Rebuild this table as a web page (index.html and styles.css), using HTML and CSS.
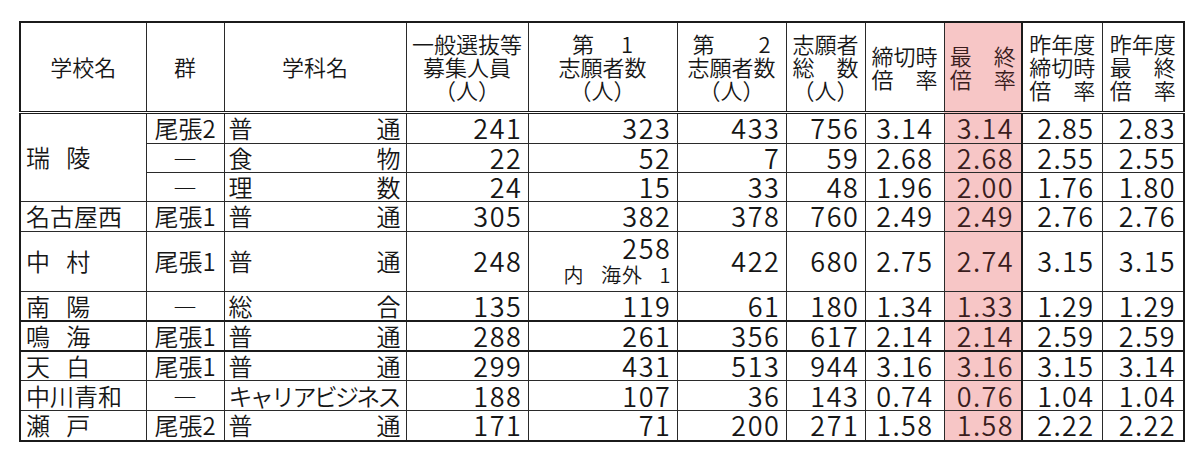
FILE: index.html
```html
<!DOCTYPE html>
<html lang="ja">
<head>
<meta charset="utf-8">
<link rel="stylesheet" href="styles.css">
</head>
<body>
<div class="page">
<table class="t">
<colgroup>
<col class="w-sch"><col class="w-grp"><col class="w-dep"><col class="w-cap"><col class="w-a1"><col class="w-a2"><col class="w-tot"><col class="w-r1"><col class="w-r2"><col class="w-r3"><col class="w-r4">
</colgroup>
<thead>
<tr class="hd">
<th>学校名</th>
<th>群</th>
<th>学科名</th>
<th>一般選抜等<br>募集人員<br>（人）</th>
<th>第　 1<br>志願者数<br>（人）</th>
<th>第　　2<br>志願者数<br>（人）</th>
<th>志願者<br>総　数<br>（人）</th>
<th>締切時<br>倍　率</th>
<th class="pk">最　終<br>倍　率</th>
<th class="sep">昨年度<br>締切時<br>倍　率</th>
<th>昨年度<br>最　終<br>倍　率</th>
</tr>
</thead>
<tbody>
<tr class="h31">
<td class="sch" rowspan="3">瑞 陵</td><td class="grp">尾張2</td><td class="dep"><div class="jst"><span>普</span><span>通</span></div></td>
<td class="num">241</td><td class="num">323</td><td class="num">433</td><td class="num">756</td><td class="dec d1">3.14</td><td class="dec pk">3.14</td><td class="dec sep">2.85</td><td class="dec">2.83</td>
</tr>
<tr class="h29">
<td class="grp">―</td><td class="dep"><div class="jst"><span>食</span><span>物</span></div></td>
<td class="num">22</td><td class="num">52</td><td class="num">7</td><td class="num">59</td><td class="dec d1">2.68</td><td class="dec pk">2.68</td><td class="dec sep">2.55</td><td class="dec">2.55</td>
</tr>
<tr class="h29">
<td class="grp">―</td><td class="dep"><div class="jst"><span>理</span><span>数</span></div></td>
<td class="num">24</td><td class="num">15</td><td class="num">33</td><td class="num">48</td><td class="dec d1">1.96</td><td class="dec pk">2.00</td><td class="dec sep">1.76</td><td class="dec">1.80</td>
</tr>
<tr class="h30">
<td class="sch">名古屋西</td><td class="grp">尾張1</td><td class="dep"><div class="jst"><span>普</span><span>通</span></div></td>
<td class="num">305</td><td class="num">382</td><td class="num">378</td><td class="num">760</td><td class="dec d1">2.49</td><td class="dec pk">2.49</td><td class="dec sep">2.76</td><td class="dec">2.76</td>
</tr>
<tr class="h60">
<td class="sch">中 村</td><td class="grp">尾張1</td><td class="dep"><div class="jst"><span>普</span><span>通</span></div></td>
<td class="num">248</td><td class="num two"><div>258</div><div class="note">内 海外 1</div></td><td class="num">422</td><td class="num">680</td><td class="dec d1">2.75</td><td class="dec pk">2.74</td><td class="dec sep">3.15</td><td class="dec">3.15</td>
</tr>
<tr class="h28 thick">
<td class="sch">南 陽</td><td class="grp">―</td><td class="dep"><div class="jst"><span>総</span><span>合</span></div></td>
<td class="num">135</td><td class="num">119</td><td class="num">61</td><td class="num">180</td><td class="dec d1">1.34</td><td class="dec pk">1.33</td><td class="dec sep">1.29</td><td class="dec">1.29</td>
</tr>
<tr class="h30 thick">
<td class="sch">鳴 海</td><td class="grp">尾張1</td><td class="dep"><div class="jst"><span>普</span><span>通</span></div></td>
<td class="num">288</td><td class="num">261</td><td class="num">356</td><td class="num">617</td><td class="dec d1">2.14</td><td class="dec pk">2.14</td><td class="dec sep">2.59</td><td class="dec">2.59</td>
</tr>
<tr class="h30">
<td class="sch">天 白</td><td class="grp">尾張1</td><td class="dep"><div class="jst"><span>普</span><span>通</span></div></td>
<td class="num">299</td><td class="num">431</td><td class="num">513</td><td class="num">944</td><td class="dec d1">3.16</td><td class="dec pk">3.16</td><td class="dec sep">3.15</td><td class="dec">3.14</td>
</tr>
<tr class="h30">
<td class="sch">中川青和</td><td class="grp">―</td><td class="dep kata">キャリアビジネス</td>
<td class="num">188</td><td class="num">107</td><td class="num">36</td><td class="num">143</td><td class="dec d1">0.74</td><td class="dec pk">0.76</td><td class="dec sep">1.04</td><td class="dec">1.04</td>
</tr>
<tr class="h30">
<td class="sch">瀬 戸</td><td class="grp">尾張2</td><td class="dep"><div class="jst"><span>普</span><span>通</span></div></td>
<td class="num">171</td><td class="num">71</td><td class="num">200</td><td class="num">271</td><td class="dec d1">1.58</td><td class="dec pk">1.58</td><td class="dec sep">2.22</td><td class="dec">2.22</td>
</tr>
</tbody>
</table>
</div>
</body>
</html>
```

FILE: styles.css
```css
html, body {
  margin: 0;
  background: #ffffff;
}
.page {
  padding: 21px 0 0 19px;
}
.t {
  border-collapse: collapse;
  table-layout: fixed;
  width: 1164px;
  font-family: "Noto Sans CJK JP", "Noto Sans", sans-serif;
  font-weight: 350;
  color: #161616;
  border: 2px solid #1b1b1b;
}
.w-sch { width: 126px; }
.w-grp { width: 78px; }
.w-dep { width: 182px; }
.w-cap { width: 122px; }
.w-a1 { width: 149px; }
.w-a2 { width: 109px; }
.w-tot { width: 79px; }
.w-r1 { width: 79px; }
.w-r2 { width: 78px; }
.w-r3 { width: 80px; }
.w-r4 { width: 82px; }

.t th, .t td {
  border: 1px solid #2a2a2a;
  padding: 0;
  white-space: nowrap;
  vertical-align: middle;
}
.t th {
  font-weight: 350;
  font-size: 22px;
  line-height: 23px;
  text-align: center;
  border-bottom: 3px double #1b1b1b;
}
.hd { height: 90px; }
.h28 { height: 28px; }
.h29 { height: 29px; }
.h30 { height: 30px; }
.h31 { height: 31px; }
.h60 { height: 60px; }
.thick td { border-bottom: 2px solid #1b1b1b; }

.pk { background: #f7c6c6; color: #3a1d1d; }
.sep { border-left: 2px solid #1b1b1b !important; }

.sch {
  font-size: 24px;
  line-height: 26px;
  padding-left: 5px !important;
  word-spacing: 11px;
  text-align: left;
}
.grp {
  font-size: 24px;
  line-height: 26px;
  text-align: center;
}
.dep {
  font-size: 24px;
  line-height: 26px;
  padding: 0 5px 0 4px !important;
}
.jst {
  display: flex;
  justify-content: space-between;
}
.kata {
  letter-spacing: -2.7px;
}
.num {
  font-size: 27px;
  line-height: 28px;
  letter-spacing: 1.6px;
  text-align: right;
  padding-right: 5px !important;
}
.dec {
  font-size: 27px;
  line-height: 28px;
  letter-spacing: 1.4px;
  text-align: right;
  padding-right: 7px !important;
}
.d1 { padding-right: 10px !important; }
.two { line-height: 27px; }
.note {
  font-size: 20px;
  line-height: 28px;
  letter-spacing: 1px;
  word-spacing: 11px;
}
```
